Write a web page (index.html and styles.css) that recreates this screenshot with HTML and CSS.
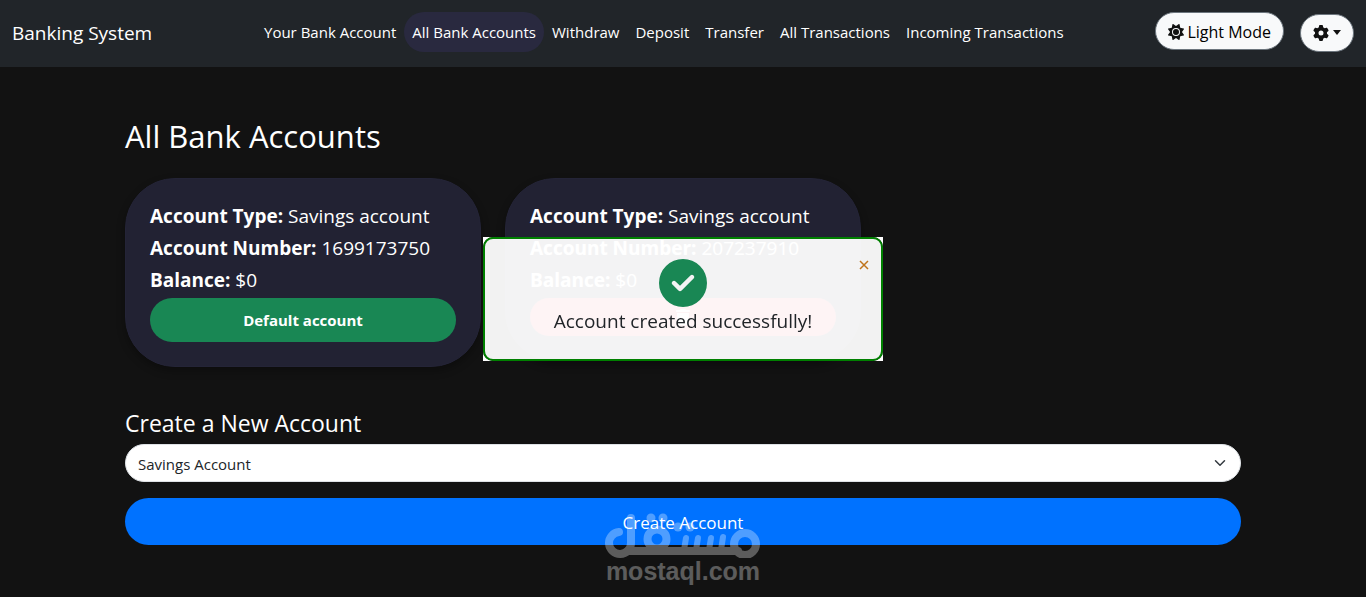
FILE: index.html
```html
<!DOCTYPE html>
<html lang="en">
<head>
<meta charset="utf-8">
<title>Banking System</title>
<link rel="stylesheet" href="styles.css">
</head>
<body>
<header class="navbar">
  <a class="brand" href="#">Banking System</a>
  <nav class="nav-links">
    <a class="nav-link" href="#">Your Bank Account</a>
    <a class="nav-link active" href="#">All Bank Accounts</a>
    <a class="nav-link" href="#">Withdraw</a>
    <a class="nav-link" href="#">Deposit</a>
    <a class="nav-link" href="#">Transfer</a>
    <a class="nav-link" href="#">All Transactions</a>
    <a class="nav-link" href="#">Incoming Transactions</a>
  </nav>
  <div class="nav-actions">
    <button class="pill-btn mode-btn" type="button">
      <svg class="icon" viewBox="0 0 512 512" aria-hidden="true"><path d="M361.5 1.200c5 2.100 8.600 6.600 9.600 11.900L391 121l107.900 19.800c5.300 1 9.800 4.600 11.900 9.600s1.500 10.700-1.600 15.200L446.900 256l62.300 90.300c3.100 4.500 3.700 10.200 1.600 15.200s-6.600 8.600-11.900 9.600L391 391 371.100 498.900c-1 5.300-4.600 9.800-9.600 11.900s-10.700 1.500-15.200-1.600L256 446.900l-90.300 62.300c-4.500 3.100-10.200 3.700-15.200 1.600s-8.600-6.600-9.600-11.900L121 391 13.100 371.100c-5.300-1-9.800-4.600-11.900-9.600s-1.500-10.700 1.600-15.200L65.100 256 2.800 165.700c-3.100-4.500-3.700-10.200-1.600-15.200s6.600-8.600 11.900-9.600L121 121 140.900 13.100c1-5.300 4.600-9.800 9.600-11.900s10.700-1.500 15.200 1.600L256 65.100 346.300 2.800c4.500-3.100 10.200-3.700 15.200-1.600zM160 256a96 96 0 1 1 192 0 96 96 0 1 1-192 0zm224 0a128 128 0 1 0-256 0 128 128 0 1 0 256 0z"/></svg>
      <span>Light Mode</span>
    </button>
    <button class="pill-btn settings-btn" type="button" aria-label="Settings">
      <svg class="icon" viewBox="0 0 512 512" aria-hidden="true"><path d="M495.900 166.600c3.200 8.700.5 18.400-6.400 24.600l-43.300 39.400c1.100 8.300 1.700 16.800 1.700 25.400s-.6 17.100-1.700 25.400l43.300 39.400c6.900 6.200 9.600 15.900 6.400 24.600-4.400 11.900-9.700 23.300-15.800 34.300l-4.700 8.100c-6.600 11-14 21.400-22.100 31.200-5.900 7.200-15.700 9.600-24.500 6.800l-55.700-17.700c-13.400 10.300-28.200 18.900-44 25.400l-12.500 57.100c-2 9.100-9 16.300-18.200 17.800-13.800 2.300-28 3.500-42.500 3.500s-28.700-1.200-42.500-3.500c-9.200-1.500-16.200-8.700-18.200-17.800l-12.500-57.100c-15.800-6.500-30.600-15.100-44-25.400l-55.600 17.800c-8.800 2.800-18.600.3-24.500-6.800-8.100-9.800-15.500-20.200-22.100-31.200l-4.700-8.100c-6.100-11-11.400-22.400-15.800-34.300-3.200-8.700-.5-18.400 6.400-24.600l43.300-39.400c-1.100-8.400-1.700-16.900-1.700-25.500s.6-17.100 1.700-25.400l-43.300-39.400c-6.900-6.200-9.600-15.900-6.400-24.600 4.400-11.900 9.700-23.300 15.800-34.300l4.700-8.100c6.600-11 14-21.400 22.100-31.200 5.900-7.200 15.700-9.600 24.500-6.800l55.700 17.700c13.400-10.300 28.200-18.900 44-25.400l12.500-57.100c2-9.100 9-16.300 18.200-17.800C227.300 1.200 241.500 0 256 0s28.700 1.200 42.500 3.500c9.200 1.500 16.200 8.700 18.200 17.800l12.500 57.100c15.800 6.500 30.600 15.100 44 25.400l55.700-17.700c8.800-2.800 18.600-.3 24.500 6.800 8.100 9.800 15.500 20.200 22.100 31.200l4.700 8.100c6.100 11 11.400 22.400 15.700 34.400zM256 336a80 80 0 1 0 0-160 80 80 0 1 0 0 160z"/></svg>
      <span class="caret"></span>
    </button>
  </div>
</header>

<main class="container">
  <h1 class="page-title">All Bank Accounts</h1>
  <section class="cards">
    <article class="card">
      <p class="card-line"><strong>Account Type:</strong> Savings account</p>
      <p class="card-line"><strong>Account Number:</strong> 1699173750</p>
      <p class="card-line"><strong>Balance:</strong> $0</p>
      <button class="default-btn" type="button">Default account</button>
    </article>
    <article class="card">
      <p class="card-line"><strong>Account Type:</strong> Savings account</p>
      <p class="card-line"><strong>Account Number:</strong> 207237910</p>
      <p class="card-line"><strong>Balance:</strong> $0</p>
      <button class="delete-btn" type="button" aria-label="Delete account">
        <svg class="trash" viewBox="0 0 448 512" aria-hidden="true"><path d="M135.200 17.700C140.600 6.800 151.700 0 163.800 0h120.400c12.100 0 23.200 6.800 28.600 17.700L320 32h96c17.700 0 32 14.300 32 32s-14.300 32-32 32H32C14.300 96 0 81.700 0 64s14.300-32 32-32h96zM32 128h384l-21.200 339c-1.600 25.300-22.600 45-47.900 45H101.100c-25.300 0-46.300-19.700-47.900-45z"/></svg>
      </button>
    </article>
  </section>

  <form class="create-form">
    <label class="form-title" for="account-type">Create a New Account</label>
    <div class="select-wrap">
      <select class="select" id="account-type">
        <option>Savings Account</option>
      </select>
      <svg class="chevron" viewBox="0 0 16 16" aria-hidden="true"><path d="m2 5 6 6 6-6"/></svg>
    </div>
    <button class="create-btn" type="button">Create Account</button>
  </form>
</main>

<div class="toast" role="alert">
  <div class="toast-box">
    <button class="toast-close" type="button" aria-label="Close"><svg class="close-icon" viewBox="0 0 10 10" aria-hidden="true"><path d="M1 1l8 8M9 1L1 9"/></svg></button>
    <svg class="toast-icon" viewBox="0 0 512 512" aria-hidden="true"><path d="M256 512A256 256 0 1 0 256 0a256 256 0 1 0 0 512zM369 209L241 337c-9.400 9.400-24.600 9.400-33.900 0l-64-64c-9.400-9.400-9.400-24.600 0-33.900s24.600-9.400 33.900 0l47 47L335 175c9.400-9.400 24.600-9.400 33.900 0s9.400 24.600 0 33.900z"/></svg>
    <p class="toast-text">Account created successfully!</p>
  </div>
</div>

<div class="watermark">
  <svg class="watermark-logo" viewBox="0 0 156 46" aria-hidden="true">
    <g fill="none" stroke="#fff" stroke-width="8" stroke-linecap="round">
      <path d="M14 20A11 11 0 1 0 26 31V6"/>
      <path d="M23 39H133"/>
      <circle cx="52" cy="27" r="9.500"/>
      <circle cx="140" cy="32" r="11"/>
      <path stroke-width="6" d="M81 26l-2 12M93 26l-2 12M106 26l-2 12M118 25l-2 13"/>
    </g>
    <g fill="#fff"><circle cx="46" cy="6" r="4.500"/><circle cx="58" cy="6" r="4.500"/><circle cx="73" cy="15" r="4.500"/><circle cx="85" cy="15" r="4.500"/></g>
  </svg>
  <span class="watermark-text">mostaql.com</span>
</div>
</body>
</html>
```
FILE: styles.css
```css
* { box-sizing: border-box; }

body {
  margin: 0;
  min-height: 100vh;
  background: #121212;
  color: #fff;
  font: 15px/24px "Open Sans", "Noto Sans", sans-serif;
}

button, select { font: inherit; cursor: pointer; }
h1, p { margin: 0; }

.navbar {
  display: flex;
  align-items: center;
  justify-content: space-between;
  height: 67px;
  padding: 0 12px 2px;
  background: #212529;
}
.brand { color: #fff; font-size: 19px; text-decoration: none; }
.nav-links { display: flex; margin-left: 20px; padding-bottom: 2px; }
.nav-link {
  padding: 8px;
  border-radius: 20px;
  color: #fff;
  text-decoration: none;
  white-space: nowrap;
}
.nav-link.active { background: #29293f; }

.nav-actions { display: flex; align-items: center; gap: 16px; }
.pill-btn {
  display: flex;
  align-items: center;
  gap: 4px;
  height: 38px;
  padding: 0 12px;
  border: 1px solid #6c757d;
  border-radius: 20px;
  background: #f8f9fa;
  color: #000;
}
.mode-btn { gap: 3px; margin-bottom: 4px; padding-top: 2px; font-size: 16px; }
.icon { width: 16px; height: 16px; fill: #111; }
.caret {
  border-top: 5px solid #111;
  border-left: 4px solid transparent;
  border-right: 4px solid transparent;
}

.container { max-width: 1140px; margin: 0 auto; padding: 49px 12px 0; }
.page-title { margin-bottom: 22px; font-size: 31px; font-weight: 400; line-height: 40px; }

.cards {
  display: grid;
  grid-template-columns: repeat(3, 1fr);
  align-items: start;
  gap: 24px;
}
.card {
  padding: 21px 24px 24px;
  border: 1px solid #242437;
  border-radius: 50px;
  background: #222233;
  box-shadow: 0 4px 8px rgba(0, 0, 0, .3);
}
.card-line { font-size: 19px; line-height: 32px; }
.default-btn, .delete-btn {
  display: block;
  width: 100%;
  margin-top: 2px;
  border: 0;
  border-radius: 22px;
  color: #fff;
}
.default-btn { height: 44px; background: #198754; font-weight: 700; }
.delete-btn { height: 38px; background: #dc3545; }
.trash { display: block; width: 14px; height: 16px; margin: 0 auto; fill: #fff; }

.create-form { display: flex; flex-direction: column; margin-top: 40px; }
.form-title { margin-bottom: 5px; font-size: 23px; line-height: 32px; }
.select-wrap { position: relative; margin-bottom: 16px; }
.select {
  display: block;
  width: 100%;
  height: 38px;
  padding: 2px 12px 0;
  border: 1px solid #dee2e6;
  border-radius: 20px;
  background: #fff;
  color: #212529;
  appearance: none;
}
.chevron {
  position: absolute;
  top: 13px;
  right: 15px;
  width: 12px;
  height: 12px;
  fill: none;
  stroke: #343a40;
  stroke-width: 2;
  stroke-linecap: round;
  stroke-linejoin: round;
  pointer-events: none;
}
.create-btn {
  height: 47px;
  padding-top: 3px;
  border: 0;
  border-radius: 24px;
  background: #0072ff;
  color: #fff;
  font-size: 17px;
}

.toast {
  position: fixed;
  top: 50%;
  left: 50%;
  width: 400px;
  transform: translate(-50%, -50%);
  overflow: hidden;
}
.toast-box {
  display: flex;
  flex-direction: column;
  align-items: center;
  padding: 20px 20px 24px;
  border: 2px solid #008000;
  border-radius: 10px;
  background: rgba(255, 255, 255, .95);
  box-shadow: 0 0 0 5px #fff;
}
.toast-icon { width: 48px; height: 48px; fill: #198754; }
.toast-text { color: #212529; font-size: 19px; line-height: 28px; }
.toast-close {
  position: absolute;
  top: 20px;
  right: 11px;
  width: 16px;
  height: 16px;
  padding: 3px;
  border: 0;
  background: none;
}
.close-icon { display: block; width: 10px; height: 10px; fill: none; stroke: #bf741b; stroke-width: 1.5; }

.watermark {
  position: absolute;
  left: 50%;
  bottom: 13px;
  display: flex;
  flex-direction: column;
  align-items: center;
  width: 160px;
  transform: translateX(-50%);
  opacity: .31;
  pointer-events: none;
}
.watermark-logo { width: 156px; height: 46px; }
.watermark-text { font: 700 25px/26px "Liberation Sans", Arial, sans-serif; }
```
